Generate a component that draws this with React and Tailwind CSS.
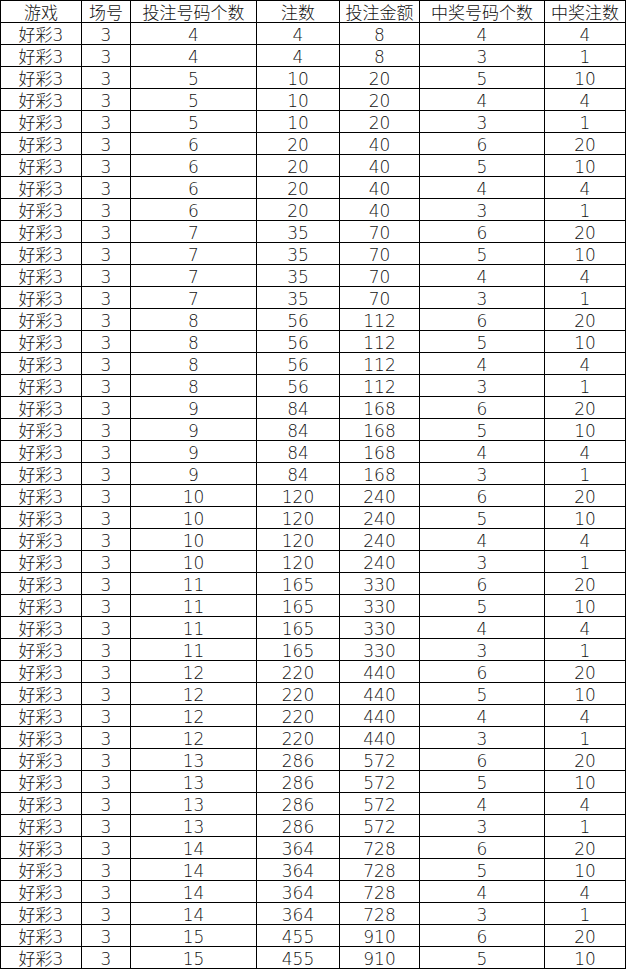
import React from "react";

const C3 = (n) => (n * (n - 1) * (n - 2)) / 6;

function buildRows() {
  const rows = [];
  for (let n = 4; n <= 15; n++) {
    const top = Math.min(n, 6);
    for (let k = top; k >= 3; k--) {
      rows.push([n, C3(n), C3(n) * 2, k, C3(k)]);
    }
  }
  return rows.slice(0, 43);
}

const headers = ["游戏", "场号", "投注号码个数", "注数", "投注金额", "中奖号码个数", "中奖注数"];

const gridCls =
  "grid grid-cols-[81px_49px_126px_83px_80px_125px_81px]";
const cellCls =
  "flex items-center justify-center border-r border-b border-black whitespace-nowrap leading-none h-[22px] pt-[4px]";

export default function App() {
  const rows = buildRows();
  return (
    <div
      className="bg-white text-[#111] w-[627px] h-[970px] overflow-hidden font-light"
      style={{ fontFamily: '"DejaVu Sans", "Noto Sans CJK SC", sans-serif' }}
    >
      <div className="w-[626px] border-l border-t border-black text-[17px]">
        <div className={gridCls}>
          {headers.map((h) => (
            <div key={h} className={cellCls}>
              {h}
            </div>
          ))}
        </div>
        {rows.map((r, i) => (
          <div key={i} className={gridCls}>
            <div className={cellCls}>好彩3</div>
            <div className={cellCls}>3</div>
            {r.map((v, j) => (
              <div key={j} className={cellCls}>
                {v}
              </div>
            ))}
          </div>
        ))}
      </div>
    </div>
  );
}
